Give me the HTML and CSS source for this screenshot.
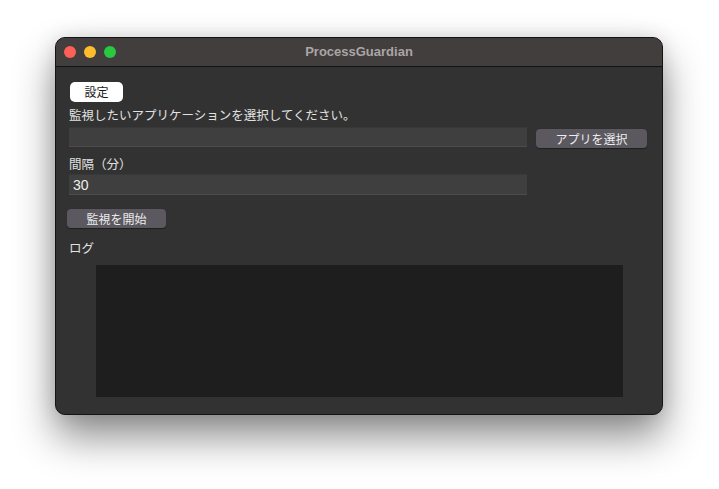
FILE: index.html
```html
<!DOCTYPE html>
<html lang="ja">
<head>
<meta charset="utf-8">
<title>ProcessGuardian</title>
<link rel="stylesheet" href="styles.css">
</head>
<body>
<div class="window">
  <div class="titlebar">
    <div class="lights">
      <span class="light red"></span>
      <span class="light yellow"></span>
      <span class="light green"></span>
    </div>
    <div class="title">ProcessGuardian</div>
  </div>
  <div class="content">
    <button class="tab">設定</button>
    <div class="label first">監視したいアプリケーションを選択してください。</div>
    <div class="row">
      <div class="field app"></div>
      <button class="btn pick">アプリを選択</button>
    </div>
    <div class="label">間隔（分）</div>
    <div class="field interval">30</div>
    <button class="btn start">監視を開始</button>
    <div class="label log-label">ログ</div>
    <div class="log"></div>
  </div>
</div>
</body>
</html>
```

FILE: styles.css
```css
html, body {
  margin: 0;
  padding: 0;
  background: #ffffff;
}
body {
  padding: 37px 0 0 55px;
  min-height: 489px;
  box-sizing: border-box;
  font-family: "Noto Sans CJK JP", "Noto Sans", sans-serif;
}
.window {
  width: 608px;
  height: 378px;
  box-sizing: border-box;
  background: #323232;
  border: 1px solid #141414;
  border-radius: 10px;
  overflow: hidden;
  box-shadow: 0 22px 40px rgba(0,0,0,0.45), 0 0 20px rgba(0,0,0,0.12);
  display: flex;
  flex-direction: column;
}
.titlebar {
  height: 28px;
  background: #423e3e;
  border-bottom: 1px solid #121212;
  display: flex;
  align-items: center;
  position: relative;
  flex-shrink: 0;
}
.lights {
  display: flex;
  gap: 8px;
  padding-left: 8px;
}
.light {
  width: 12px;
  height: 12px;
  border-radius: 50%;
  display: block;
}
.red { background: #fe5f57; }
.yellow { background: #febc2e; }
.green { background: #28c840; }
.title {
  position: absolute;
  left: 0;
  right: 0;
  text-align: center;
  font-family: "Liberation Sans", "Noto Sans", sans-serif;
  font-weight: bold;
  font-size: 13px;
  color: #a9a6a6;
  top: 6px;
}
.content {
  display: flex;
  flex-direction: column;
  align-items: flex-start;
  padding: 15px 0 0 13px;
}
button {
  font-family: "Noto Sans CJK JP", "Noto Sans", sans-serif;
  border: none;
  padding: 0;
  cursor: default;
}
.tab {
  margin-left: 1px;
  width: 53px;
  height: 20px;
  background: #ffffff;
  color: #1a1a1a;
  border-radius: 5px;
  font-size: 12px;
  line-height: 20px;
}
.label {
  color: #e2e2e2;
  font-size: 12.5px;
  line-height: 17px;
  height: 17px;
}
.label.first {
  margin-top: 4px;
}
.row {
  display: flex;
  align-items: flex-start;
  margin-top: 4px;
}
.field {
  width: 458px;
  height: 20px;
  box-sizing: border-box;
  background: #3f3f3f;
  border-bottom: 1px solid #4c4c4c;
  border-top: 1px solid #383838;
  color: #f0f0f0;
  font-size: 14px;
  line-height: 19px;
  padding-left: 4px;
  font-family: "Liberation Sans", "Noto Sans", sans-serif;
}
.btn {
  background: #5b5860;
  color: #ececec;
  font-size: 12px;
  height: 19px;
  line-height: 19px;
  border-radius: 4px;
  box-shadow: 0 0.5px 1px rgba(0,0,0,0.4);
}
.pick {
  width: 111px;
  margin-left: 9px;
  margin-top: 2px;
}
.row + .label {
  margin-top: 7px;
}
.interval {
  margin-top: 2px;
  height: 21px;
  line-height: 20px;
}
.start {
  width: 99px;
  margin-left: -2px;
  margin-top: 14px;
}
.log-label {
  margin-top: 11px;
}
.log {
  margin-top: 9px;
  margin-left: 27px;
  width: 527px;
  height: 132px;
  background: #1e1e1e;
}
```
